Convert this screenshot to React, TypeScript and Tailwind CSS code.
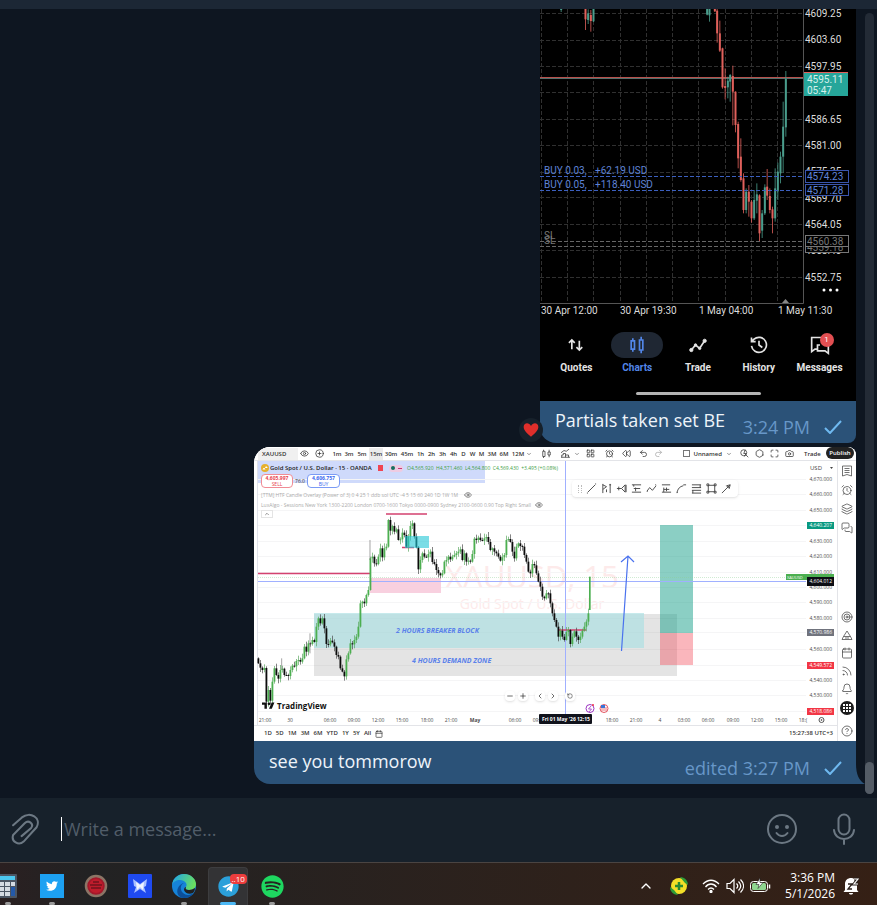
import React from 'react';
import {
    AlarmClock,
    Bell,
    Calendar,
    Camera,
    ChevronDown,
    ChevronLeft,
    ChevronRight,
    ChevronUp,
    CircleHelp,
    CirclePlus,
    Eye,
    Hexagon,
    Layers,
    LayoutGrid,
    Maximize,
    MessagesSquare,
    Minus,
    Plus,
    Redo2,
    Rewind,
    RotateCcw,
    Rss,
    Target,
    Undo2,
} from 'lucide-react';
import { FaSpotify, FaTelegram, FaTwitter } from 'react-icons/fa';

// x, wick top, wick bottom, body top, body bottom, direction (1 = up)
const MOBILE_CANDLES = [
    [93, 27, 36, 27, 30, 1],
    [166, 27, 90, 27, 58, 0],
    [174, 28, 72, 40, 60, 1],
    [182, 30, 95, 45, 63, 0],
    [190, 27, 66, 27, 64, 1],
    [531, 27, 46, 27, 44, 1],
    [538, 27, 65, 27, 46, 1],
    [554, 27, 36, 27, 34, 0],
    [561, 27, 128, 32, 100, 0],
    [569, 62, 156, 100, 152, 0],
    [577, 143, 266, 145, 262, 0],
    [585, 205, 298, 258, 264, 0],
    [593, 230, 295, 242, 262, 1],
    [600, 222, 305, 225, 245, 1],
    [608, 197, 376, 228, 275, 0],
    [616, 274, 397, 275, 375, 0],
    [624, 365, 505, 372, 475, 0],
    [632, 415, 545, 470, 540, 0],
    [640, 520, 640, 535, 630, 0],
    [648, 565, 640, 575, 630, 1],
    [656, 555, 650, 575, 605, 0],
    [664, 600, 668, 605, 655, 0],
    [672, 570, 660, 600, 655, 1],
    [680, 550, 640, 583, 602, 1],
    [688, 583, 725, 586, 700, 0],
    [696, 630, 714, 640, 692, 1],
    [704, 553, 645, 562, 640, 1],
    [711, 507, 600, 560, 587, 0],
    [719, 565, 640, 588, 630, 0],
    [727, 620, 700, 628, 655, 0],
    [735, 505, 665, 565, 655, 1],
    [743, 488, 600, 515, 574, 1],
    [751, 455, 550, 470, 520, 1],
    [759, 305, 518, 380, 470, 1],
    [767, 213, 410, 237, 382, 1],
];

// closing levels of the desktop chart, one entry per 15 minute bar
const CLOSES = [
    670, 683, 690, 684, 785, 750, 782, 725, 685, 705, 716, 690, 686, 705, 705, 708, 690, 677, 679,
    663, 660, 665, 655, 620, 635, 610, 612, 600, 606, 560, 535, 550, 535, 565, 612, 613, 602, 607,
    620, 645, 650, 685, 695, 709, 658, 640, 610, 613, 600, 590, 560, 490, 485, 490, 465, 450, 355,
    350, 370, 372, 350, 325, 352, 325, 320, 240, 272, 258, 275, 268, 300, 298, 278, 285, 320, 290,
    258, 250, 290, 322, 388, 360, 340, 350, 352, 342, 335, 366, 372, 390, 400, 406, 400, 365, 360,
    350, 358, 350, 345, 340, 335, 328, 360, 340, 365, 362, 365, 342, 296, 300, 293, 300, 302, 295,
    291, 306, 330, 325, 335, 340, 350, 362, 352, 345, 300, 297, 306, 335, 355, 320, 310, 318, 320,
    345, 365, 395, 400, 372, 376, 400, 425, 440, 470, 475, 460, 460, 490, 520, 540, 560, 590, 572,
    590, 600, 576, 570, 612, 590, 574, 590, 600, 590, 572, 560, 545, 520,
];

const GRID_Y = [479, 494, 510, 525, 541, 556, 572, 587, 602, 618, 632, 649, 665, 680, 695, 711];

const PRICES: [string, number][] = [
    ['4,670.000', 479],
    ['4,660.000', 494],
    ['4,650.000', 510],
    ['4,630.000', 541],
    ['4,620.000', 556],
    ['4,610.000', 572],
    ['4,600.000', 587],
    ['4,590.000', 602],
    ['4,580.000', 618],
    ['4,560.000', 649],
    ['4,540.000', 680],
    ['4,530.000', 695],
];

const PRICE_TAGS: [string, number, string][] = [
    ['4,640.207', 525, '#089981'],
    ['4,570.986', 632, '#70737d'],
    ['4,549.572', 665, '#f23645'],
    ['4,518.086', 711, '#f23645'],
    ['4,604.012', 581, '#0c0e14'],
];

const TIMES: [string, number][] = [
    ['21:00', 265],
    ['30', 290],
    ['06:00', 330],
    ['09:00', 354],
    ['12:00', 378],
    ['15:00', 402],
    ['18:00', 427],
    ['21:00', 451],
    ['06:00', 515],
    ['09:00', 539],
    ['18:00', 612],
    ['21:00', 636],
    ['4', 660],
    ['03:00', 684],
    ['06:00', 708],
    ['09:00', 733],
    ['12:00', 757],
    ['15:00', 781],
    ['18:(', 803],
];

const INTERVALS: [string, string][] = [
    ['1m', 'w-3'],
    ['3m', 'w-3'],
    ['5m', 'w-3.5'],
    ['15m', 'w-3.5 bg-[#ebebeb]'],
    ['30m', 'w-4'],
    ['45m', 'w-4'],
    ['1h', 'w-[11px]'],
    ['2h', 'w-[11px]'],
    ['3h', 'w-[11px]'],
    ['4h', 'w-[11px]'],
    ['D', 'w-[9px]'],
    ['W', 'w-[9px]'],
    ['M', 'w-[9px]'],
    ['3M', 'w-3'],
    ['6M', 'w-3'],
    ['12M', 'w-4'],
];

const DRAW_TOOLS = [
    'M2 10L10 2M1 11h1M10 1h1',
    'M2 1v10M2 2l4 2-4 3M6 7v3M10 1v10M9 2h2',
    'M1 6h5M6 6l4-4v8zM3 4v4M11 2v8',
    'M1 2h10M3 6h7M5 5v4M1 10h10M3 2v2',
    'M1 9l3-4 3 3 4-5M10 2h1M1 9h1',
    'M1 2h9M3 5v5M3 7h6M1 10h10M6 5v4',
    'M1 11c1-5 3-7 7-8M8 2h3M1 10h1',
    'M1 2h10M1 5h10M1 8h10M1 11h10M10 2v3M2 8v3',
    'M2.500 2.500h7v7h-7zM1 1h2v2H1zM9 1h2v2H9zM1 9h2v2H1zM9 9h2v2H9z',
    'M1 11L10 2M6 3l4-1-1 4z',
];

function MobileChart() {
    const columns = [541, 567, 593, 620, 646, 672, 698, 725, 751, 777];
    const rows = [13, 40, 66, 92, 119, 145, 172, 197, 224, 250, 277];
    const prices: [string, number][] = [
        ['4609.25', 13],
        ['4603.60', 39],
        ['4597.95', 66],
        ['4586.65', 119],
        ['4581.00', 145],
        ['4575.35', 171],
        ['4569.70', 198],
        ['4564.05', 224],
        ['4558.40', 250],
        ['4552.75', 277],
    ];

    return (
        <svg viewBox="540 9 316 312" className="block w-full font-[Roboto] text-[10px]" role="img" aria-label="Gold chart">
            <g stroke="#303030" strokeDasharray="4 2" shapeRendering="crispEdges">
                {columns.map((x) => (
                    <path key={x} d={`M${x} 9V303`} />
                ))}
                {rows.map((y) => (
                    <path key={y} d={`M540 ${y}H803`} />
                ))}
            </g>
            <path d="M803.5 9V303.5H540" fill="none" stroke="#555" />
            <path d="M540 77.5H803" stroke="#b8504c" />
            <path d="M540 78.5H803" stroke="#55706c" />
            <g transform="translate(530 0) scale(0.33333)">
                {MOBILE_CANDLES.map(([x, high, low, top, bottom, up]) => (
                    <g key={x} fill={up ? '#4a9d8c' : '#e0605b'}>
                        <rect x={x - 1} y={high} width="3" height={low - high} opacity="0.8" />
                        <rect x={x - 2.5} y={top} width="6" height={bottom - top} />
                    </g>
                ))}
            </g>
            <g fill="#dcdcdc">
                {prices.map(([label, y]) => (
                    <text key={label} x="805" y={y + 4}>
                        {label}
                    </text>
                ))}
            </g>
            <rect x="804" y="72" width="44" height="24" fill="#26a69a" />
            <path d="M804 72.5h44" stroke="#e0605b" />
            <g fill="#d5f0ec">
                <text x="807" y="83">4595.11</text>
                <text x="807" y="94">05:47</text>
            </g>
            <g stroke="#3c60c0" strokeDasharray="4 2" shapeRendering="crispEdges">
                <path d="M540 176.5H804M540 190.5H804" />
            </g>
            <g fill="#5f83d6">
                <text x="544" y="174">BUY 0.03,</text>
                <text x="595" y="174">+62.19 USD</text>
                <text x="544" y="188">BUY 0.05,</text>
                <text x="595" y="188">+118.40 USD</text>
            </g>
            <g fill="#000" stroke="#3a55ad">
                <rect x="805.5" y="170.5" width="43" height="12" />
                <rect x="805.5" y="184.5" width="43" height="11" />
            </g>
            <g fill="#5f83d6">
                <text x="807" y="180">4574.23</text>
                <text x="807" y="194">4571.28</text>
            </g>
            <g stroke="#666" strokeDasharray="4 2" shapeRendering="crispEdges">
                <path d="M540 241.5H804M540 246.5H804" />
            </g>
            <g fill="#777">
                <text x="544" y="239">SL</text>
                <text x="544" y="244">SL</text>
            </g>
            <g fill="#000" stroke="#777">
                <rect x="805.5" y="241.5" width="43" height="11" />
                <text x="807" y="251" fill="#777" stroke="none">
                    4559.18
                </text>
                <rect x="805.5" y="235.5" width="43" height="11" />
            </g>
            <text x="807" y="245" fill="#777">
                4560.38
            </text>
            <g fill="#fff">
                <circle cx="824" cy="290" r="1.5" />
                <circle cx="830.500" cy="290" r="1.5" />
                <circle cx="837" cy="290" r="1.5" />
            </g>
            <path d="M782 303l3.500-4 3.500 4z" fill="#888" />
            <g fill="#dcdcdc">
                <text x="541" y="314">30 Apr 12:00</text>
                <text x="620" y="314">30 Apr 19:30</text>
                <text x="699" y="314">1 May 04:00</text>
                <text x="778" y="314">1 May 11:30</text>
            </g>
        </svg>
    );
}

const PHONE_TABS = [
    {
        label: 'Quotes',
        icon: <path d="M7 17V6M3.500 9.500L7 6l3.500 3.500M16 7v11M12.500 14.500L16 18l3.500-3.500" />,
    },
    {
        label: 'Charts',
        icon: <path d="M5 7h4v10H5zM7 4v3M7 17v3M15 6h4v12h-4zM17 2v4M17 18v4" />,
    },
    {
        label: 'Trade',
        icon: (
            <>
                <path d="M4 18l5-6 5 4 6-9" />
                <g fill="currentColor" strokeWidth="1">
                    <circle cx="4" cy="18" r="2" />
                    <circle cx="9" cy="12" r="1.500" />
                    <circle cx="14" cy="16" r="1.500" />
                    <circle cx="20" cy="7" r="2" />
                </g>
            </>
        ),
    },
    {
        label: 'History',
        icon: <path d="M3 13a9 9 0 1 0 3-8L3 8M3 3v5h5M12 7v5l4 3" />,
    },
    {
        label: 'Messages',
        icon: <path d="M9 17H6l-4 3V3h16v3M22 9v13l-4-3H9v-7h3" />,
    },
];

function PhoneScreen() {
    return (
        <div className="bg-black">
            <MobileChart />
            <nav className="flex h-20 flex-col items-center pt-[11px] font-[Roboto]">
                <div className="grid w-full grid-cols-5 px-1.5">
                    {PHONE_TABS.map(({ label, icon }) => {
                        const active = label === 'Charts';
                        return (
                            <button
                                key={label}
                                className={`flex flex-col items-center text-[10px] leading-5 font-bold ${active ? 'text-[#5286e8]' : 'text-[#e4e4e4]'}`}
                            >
                                <span
                                    className={`relative flex h-[26px] w-13 items-center justify-center rounded-full ${active ? 'bg-[#1f2733]' : ''}`}
                                >
                                    <svg
                                        viewBox="0 0 24 24"
                                        className="h-5 w-5"
                                        fill="none"
                                        stroke="currentColor"
                                        strokeWidth="2"
                                        aria-hidden="true"
                                    >
                                        {icon}
                                    </svg>
                                    {label === 'Messages' && (
                                        <span className="absolute top-px right-3 flex h-3.5 w-3.5 items-center justify-center rounded-full bg-[#e24f52] text-[8px] leading-3 font-normal text-white">
                                            1
                                        </span>
                                    )}
                                </span>
                                {label}
                            </button>
                        );
                    })}
                </div>
                <div className="mt-3.5 h-[3px] w-[125px] rounded-full bg-[#b4b4b4]" />
            </nav>
        </div>
    );
}

function DesktopChart() {
    return (
        <svg viewBox="254 461 583 264" className="block w-full text-[6px]" role="img" aria-label="XAUUSD 15 minute chart">
            <rect x="254" y="461" width="583" height="264" fill="#fff" />
            <path d="M257.500 461V725" stroke="#e0e2ea" />
            <g fill="#fdeaea" textAnchor="middle">
                <text x="532" y="588" className="text-[31px]">
                    XAUUSD, 15
                </text>
                <text x="532" y="609" className="text-[14px]">
                    Gold Spot / U.S. Dollar
                </text>
            </g>
            <rect x="258" y="461" width="227" height="22" fill="#cfdafb" />
            <g stroke="#f5f5f6">
                {GRID_Y.map((y) => (
                    <path key={y} d={`M258 ${y}.5H806`} />
                ))}
            </g>
            <rect x="314" y="614" width="363" height="62" fill="#787878" opacity="0.2" />
            <rect x="314" y="613" width="330" height="35" fill="#a9dfe2" opacity="0.65" />
            <rect x="370" y="578" width="71" height="15" fill="#f8d0df" />
            <rect x="660" y="525" width="33" height="108" fill="#089981" opacity="0.47" />
            <rect x="660" y="633" width="33" height="32" fill="#f23645" opacity="0.36" />
            <path d="M258 577.500H806" stroke="#8ccf92" strokeDasharray="1 1" opacity="0.4" />
            <g fill="#a0b0ff">
                <rect x="258" y="581" width="548" height="1" />
                <rect x="565" y="461" width="1" height="253" />
            </g>
            <g stroke="#d4426f" strokeWidth="1.500">
                <path d="M386 514H427M402 547.500H414M258 573.500H370M559 630H586" />
            </g>
            <g transform="translate(250 440) scale(0.33333)">
                {CLOSES.map((close, i) => {
                    const open = i === 0 ? 655 : CLOSES[i - 1];
                    const x = 25 + i * 6;
                    const up = close < open;
                    const top = Math.min(open, close);
                    const bottom = Math.max(open, close);
                    const above = 3 + ((i * 7) % 13);
                    const below = 2 + ((i * 11) % 14);
                    return (
                        <g key={i}>
                            <rect
                                x={x - 0.75}
                                y={top - above}
                                width="2"
                                height={bottom - top + above + below}
                                fill={up ? '#55a45a' : '#444'}
                            />
                            <rect
                                x={x - 2.5}
                                y={top}
                                width="5.5"
                                height={Math.max(bottom - top, 3)}
                                fill={up ? '#4caf50' : '#0c0c0c'}
                            />
                        </g>
                    );
                })}
                <path d="M360 300V360M180 580V640M95 655V690" stroke="#777" strokeWidth="2" />
                <rect x="1017" y="410" width="5" height="100" fill="#4caf50" />
            </g>
            <rect x="405" y="536" width="24" height="12" fill="#22c7d6" opacity="0.6" />
            <path d="M621.500 651L628 556M621 562l7-6 6 6" fill="none" stroke="#4a72ee" strokeWidth="1.200" />
            <g fill="#5b82ea" className="text-[7px] font-bold italic">
                <text x="396" y="633">2 HOURS BREAKER BLOCK</text>
                <text x="412" y="663">4 HOURS DEMAND ZONE</text>
            </g>
            <g fill="#111">
                <g transform="translate(262 701) scale(0.35)">
                    <path d="M14 22H7V11H0V4h14zM28 22h-8l7.500-18h8z" />
                    <circle cx="20" cy="8" r="4" />
                </g>
                <text x="277" y="709" className="text-[8px] font-bold">
                    TradingView
                </text>
            </g>
            <g fill="#444">
                <text x="810" y="470">USD</text>
                <path d="M830 467l1.500 2 1.500-2z" />
            </g>
            <g fill="#4a4a4a" className="text-[5px]" textAnchor="end">
                {PRICES.map(([label, y]) => (
                    <text key={label} x="832" y={y + 2}>
                        {label}
                    </text>
                ))}
            </g>
            <rect x="786" y="574" width="48" height="6" fill="#4caf50" />
            <text x="787" y="579" fill="#fff" className="text-[4px]">
                XAUUSD
            </text>
            {PRICE_TAGS.map(([label, y, color]) => (
                <g key={label} className="text-[5px]">
                    <rect x="807" y={label === '4,604.012' ? 577 : y - 3} width="27" height={label === '4,604.012' ? 9 : 7} fill={color} />
                    <text x="832" y={label === '4,604.012' ? 583 : y + 2} fill="#fff" textAnchor="end">
                        {label}
                    </text>
                </g>
            ))}
            <g fill="#4a4a4a" textAnchor="middle" className="text-[5px]">
                {TIMES.map(([label, x]) => (
                    <text key={x} x={x} y="722">
                        {label}
                    </text>
                ))}
                <text x="475" y="722" className="font-bold">
                    May
                </text>
            </g>
            <g fill="none" stroke="#555">
                <circle cx="821.500" cy="720" r="2.500" />
                <circle cx="821.500" cy="720" r="0.500" />
            </g>
            <rect x="539" y="714" width="53" height="10" rx="1" fill="#10121b" />
            <g fill="#fff" className="text-[5px] font-bold">
                <text x="542" y="721">Fri 01 May '26</text>
                <text x="577" y="721">12:15</text>
            </g>
            <g fill="#fff" strokeWidth="1">
                <circle cx="590" cy="708.500" r="4" stroke="#9c35c2" />
                <path d="M591 706l-2.500 3h3l-2.500 3" fill="none" stroke="#9c35c2" strokeWidth="0.800" />
                <circle cx="593" cy="705" r="1" fill="#f23645" />
                <circle cx="604" cy="708.500" r="4" stroke="#e4545f" />
                <path d="M601 708h6M601 710h6" stroke="#e4545f" strokeWidth="0.800" />
                <path d="M601 705h4v3h-4z" fill="#3a74d8" />
            </g>
        </svg>
    );
}

function TradingToolbar() {
    const icon = 'h-[9px] w-[9px] shrink-0';
    return (
        <div className="flex h-[14px] items-center border-b border-[#e3e4e8] bg-white pr-0.5 text-[6px] leading-[12px] font-semibold text-[#333]">
            <span className="ml-1 w-10 bg-[#f0f0f0] pl-1">XAUUSD</span>
            <Eye className={`${icon} ml-0.5`} />
            <CirclePlus className={`${icon} ml-1.5`} />
            <div className="ml-[7px] flex text-center">
                {INTERVALS.map(([label, width]) => (
                    <span key={label} className={width}>
                        {label}
                    </span>
                ))}
            </div>
            <ChevronDown className="h-1.5 w-1.5 shrink-0" />
            <svg viewBox="0 0 12 12" className={`${icon} ml-2.5`} fill="none" stroke="currentColor" aria-hidden="true">
                <path d="M1 3h3v7H1zM2 1v2M2 10v2M8 4h3v4H8zM9.500 1v3M9.500 8v3" />
            </svg>
            <svg viewBox="0 0 12 12" className={`${icon} ml-2.5`} fill="none" stroke="currentColor" aria-hidden="true">
                <path d="M1 11V8h2V6h3v5M6 8h4v3M0 5l4-3 3 1 4-3M0 11h12" />
            </svg>
            <ChevronDown className="ml-1 h-1.5 w-1.5 shrink-0" />
            <LayoutGrid className={`${icon} ml-1.5`} />
            <AlarmClock className={`${icon} ml-2.5`} />
            <Rewind className={`${icon} ml-2`} />
            <Undo2 className={`${icon} ml-2`} />
            <Redo2 className={`${icon} ml-1.5 text-[#aaa]`} />
            <span className="ml-auto h-[7px] w-[7px] shrink-0 border border-[#777]" />
            <span className="ml-1">Unnamed</span>
            <ChevronDown className="ml-1 h-1.5 w-1.5 shrink-0" />
            <svg viewBox="0 0 12 12" className={`${icon} ml-2`} fill="none" stroke="currentColor" aria-hidden="true">
                <circle cx="5" cy="5" r="4" />
                <path d="M8 8l3 3M7 1L5 6h3l-2 4" />
            </svg>
            <Hexagon className={`${icon} ml-1.5`} />
            <Maximize className={`${icon} ml-1.5`} />
            <Camera className={`${icon} ml-1.5`} />
            <span className="ml-2.5 w-5">Trade</span>
            <span className="-mt-0.5 ml-0.5 w-7 rounded-full bg-[#222] text-center text-white">Publish</span>
        </div>
    );
}

function ChartLegend() {
    return (
        <div className="absolute inset-x-0 top-0 pt-[3px] pl-[7px] leading-2">
            <div className="flex items-center whitespace-nowrap">
                <svg viewBox="0 0 8 8" className="h-2 w-2" aria-hidden="true">
                    <circle cx="4" cy="4" r="4" fill="#e6b02c" />
                    <path d="M1.500 5.500l1-1.500h1l1 1.500zM4 4l.7-1.500h1l1 1.500z" fill="#fff" />
                </svg>
                <span className="ml-px w-[108px] text-[6px] font-semibold text-[#222]">
                    Gold Spot / U.S. Dollar · 15 · OANDA
                </span>
                <span className="h-1.5 w-[5px] bg-[#f04452]" />
                <span className="ml-1.5 flex h-[7px] w-3.5 items-center justify-around rounded-sm bg-[#eecbe2]">
                    <span className="h-1 w-1 rounded-full bg-[#16705f]" />
                    <span className="h-px w-1 bg-[#c73a78]" />
                </span>
                <span className="ml-1 text-[5px] text-[#43a047]">
                    O4,565.920&nbsp; H4,571.460&nbsp; L4,564.800&nbsp; C4,569.430&nbsp; +3.495 (+0.08%)
                </span>
            </div>
            <div className="mt-0.5 flex items-center text-center text-[5px] leading-1.5 font-bold">
                <div className="w-8 rounded-sm border border-[#f08c95] bg-white text-[#e8434f]">
                    4,605.997
                    <div className="font-normal">SELL</div>
                </div>
                <span className="w-3.5 font-normal text-[#333]">76.0</span>
                <div className="w-[33px] rounded-sm border border-[#7b9bf5] bg-white text-[#3565ee]">
                    4,606.757
                    <div className="font-normal">BUY</div>
                </div>
            </div>
            <div className="mt-0.5 flex items-center gap-1 text-[5px] leading-[10px] text-[#aaa]">
                [TTM] HTF Candle Overlay (Power of 3) 0 4 25 1 ddb sol UTC -4 5 15 60 240 1D 1W 1M
                <Eye className="ml-0.5 h-2 w-2 text-[#555]" />
            </div>
            <div className="flex items-center gap-1 text-[5px] leading-[10px] text-[#aaa]">
                LuxAlgo - Sessions New York 1300-2200 London 0700-1600 Tokyo 0000-0900 Sydney 2100-0600 0.90 Top Right Small
                <Eye className="h-2 w-2 text-[#555]" />
            </div>
            <div className="flex h-2 w-3 items-center justify-center border border-[#e4e4e4]">
                <ChevronUp className="h-1.5 w-1.5 text-[#333]" />
            </div>
        </div>
    );
}

function TradingScreen() {
    const side = 'h-3 w-3 shrink-0 stroke-[1.5]';
    const move = 'flex h-2.5 w-2.5 items-center justify-center rounded-sm bg-white shadow';
    return (
        <div className="overflow-hidden rounded-tl-2xl rounded-tr-lg bg-white font-['Open_Sans',sans-serif]">
            <TradingToolbar />
            <div className="flex">
                <div className="min-w-0 flex-1">
                    <div className="relative">
                        <DesktopChart />
                        <ChartLegend />
                        <div className="absolute top-[19px] left-[318px] flex h-[17px] items-center gap-1 rounded-sm bg-white px-1.5 text-[#444] shadow">
                            <span className="h-2 w-1 border-x border-dotted border-[#bbb]" />
                            {DRAW_TOOLS.map((d) => (
                                <svg
                                    key={d}
                                    viewBox="0 0 12 12"
                                    className="h-[11px] w-[11px]"
                                    fill="none"
                                    stroke="currentColor"
                                    aria-hidden="true"
                                >
                                    <path d={d} />
                                </svg>
                            ))}
                        </div>
                        <div className="absolute top-[230px] left-[251px] flex gap-[3px] text-[#222]">
                            <span className={move}>
                                <Minus className="h-2 w-2" />
                            </span>
                            <span className={move}>
                                <Plus className="h-2 w-2" />
                            </span>
                            <span className={`${move} ml-1`}>
                                <ChevronLeft className="h-2 w-2" />
                            </span>
                            <span className={move}>
                                <ChevronRight className="h-2 w-2" />
                            </span>
                            <span className={`${move} ml-1`}>
                                <RotateCcw className="h-1.5 w-1.5" />
                            </span>
                        </div>
                    </div>
                    <div className="flex h-4 items-center gap-1 border-t border-[#e3e4e8] pr-1 pl-2.5 text-[6px] font-semibold text-[#333]">
                        {['1D', '5D', '1M', '3M', '6M', 'YTD', '1Y', '5Y', 'All'].map((range) => (
                            <span key={range}>{range}</span>
                        ))}
                        <Calendar className="h-2 w-2" />
                        <span className="ml-auto">15:27:38 UTC+3</span>
                    </div>
                </div>
                <div className="flex w-[19px] flex-col items-center justify-between border-l border-[#e3e4e8] pt-1 pb-1 text-[#444]">
                    <div className="flex flex-col items-center gap-[7px]">
                        <svg viewBox="0 0 24 24" className={side} fill="none" stroke="currentColor" aria-hidden="true">
                            <path d="M3 2h18v20l-9-3-9 3zM7 7h10M7 11h10M7 15h10" />
                        </svg>
                        <AlarmClock className={side} />
                        <Layers className={side} />
                        <MessagesSquare className={side} />
                    </div>
                    <div className="flex flex-col items-center gap-1.5">
                        <Target className={side} />
                        <svg viewBox="0 0 24 24" className={side} fill="none" stroke="currentColor" aria-hidden="true">
                            <path d="M12 4l7 11H5zM5 15l-3 6h20l-3-6M8 18h8" />
                        </svg>
                        <Calendar className={side} />
                        <Rss className={side} />
                        <Bell className={side} />
                        <span className="grid h-3.5 w-3.5 grid-cols-3 place-items-center gap-px rounded-full bg-[#1d1d1d] p-[3px]">
                            {Array.from({ length: 9 }, (_, i) => (
                                <span key={i} className="h-0.5 w-0.5 bg-white" />
                            ))}
                        </span>
                        <CircleHelp className={`${side} mt-1`} />
                    </div>
                </div>
            </div>
        </div>
    );
}

function SentMark({ text }: { text: string }) {
    return (
        <span className="flex items-center gap-3.5 text-lg leading-6 text-[#6797c8]">
            {text}
            <svg viewBox="0 0 18 14" className="h-3.5 w-[18px]" fill="none" stroke="#6fb9f0" strokeWidth="2" aria-label="Sent">
                <path d="M1 8l5 5L17 1" />
            </svg>
        </span>
    );
}

function Conversation() {
    return (
        <main className="relative flex min-h-0 flex-1 flex-col items-end justify-end gap-1 overflow-hidden bg-[#0e1621] pr-[21px] pb-3.5">
            <article className="relative w-[316px] shrink-0">
                <PhoneScreen />
                <div className="flex h-[42px] justify-between rounded-br-lg rounded-bl-2xl bg-[#2b5278] pr-3.5 pl-[15px]">
                    <p className="pt-[5px] text-lg leading-7 text-[#eef4fa]">Partials taken set BE</p>
                    <div className="pt-3.5">
                        <SentMark text="3:24 PM" />
                    </div>
                </div>
                <span className="absolute bottom-px -left-[21px] flex h-6 w-6 items-center justify-center rounded-full bg-[#17212b]">
                    <svg viewBox="0 0 24 24" className="h-4 w-4" aria-label="Heart reaction">
                        <path
                            d="M12 22C5 16 1 12 1 7.500 1 1 9 0 12 6c3-6 11-5 11 1.500C23 12 19 16 12 22z"
                            fill="#e02f2b"
                        />
                    </svg>
                </span>
            </article>
            <article className="relative w-[602px] shrink-0">
                <TradingScreen />
                <div className="flex h-[43px] justify-between rounded-bl-2xl bg-[#2b5278] pr-3.5 pl-[15px]">
                    <p className="pt-1.5 text-lg leading-7 text-[#eef4fa]">see you tommorow</p>
                    <div className="pt-[15px]">
                        <SentMark text="edited 3:27 PM" />
                    </div>
                </div>
                <svg viewBox="0 0 9 20" className="absolute bottom-0 left-full h-5 w-[9px]" aria-hidden="true">
                    <path d="M0 0C0 10 3 17 9 20H0z" fill="#2b5278" />
                </svg>
            </article>
            <div className="absolute inset-y-1 right-[3px] flex w-[9px] items-end rounded-full bg-[#232b36]">
                <div className="h-8 w-full rounded-full bg-[#545c66]" />
            </div>
        </main>
    );
}

function Composer() {
    return (
        <form className="flex h-16 shrink-0 items-center bg-[#17212b] pr-5 pb-0.5 pl-[11px] text-[#6c7883]">
            <button type="button" aria-label="Attach file">
                <svg viewBox="32 76 82 94" className="h-8 w-7" fill="none" stroke="currentColor" strokeWidth="6" strokeLinecap="round" aria-hidden="true">
                    <path d="M38 112L64 89C88 70 122 90 107 118L69 160C54 173 32 160 38 141L72 106C84 95 100 108 91 120L63 144" />
                </svg>
            </button>
            <span className="ml-[22px] h-6 w-px bg-white" />
            <input
                aria-label="Message"
                placeholder="Write a message..."
                className="ml-0.5 min-w-0 flex-1 bg-transparent text-lg text-white outline-none placeholder:text-[#515d69]"
            />
            <button type="button" aria-label="Emoji">
                <svg viewBox="0 0 32 32" className="h-8 w-8" fill="none" stroke="currentColor" strokeWidth="2" strokeLinecap="round" aria-hidden="true">
                    <circle cx="16" cy="16" r="14" />
                    <path d="M10.500 20c3 4 8 4 11 0" />
                    <g fill="currentColor" stroke="none">
                        <circle cx="11" cy="14" r="2" />
                        <circle cx="21" cy="14" r="2" />
                    </g>
                </svg>
            </button>
            <button type="button" aria-label="Record voice message" className="ml-[33px]">
                <svg viewBox="0 0 26 32" className="h-8 w-[26px]" fill="none" stroke="currentColor" strokeWidth="2" strokeLinecap="round" aria-hidden="true">
                    <rect x="7.500" y="1.500" width="11" height="20" rx="5.500" />
                    <path d="M3 17c1 12 19 12 20 0M13 26v5" />
                </svg>
            </button>
        </form>
    );
}

function EdgeIcon() {
    return (
        <svg viewBox="0 0 24 24" className="h-6 w-6" aria-hidden="true">
            <defs>
                <linearGradient id="edge-top" x1="0" x2="1" y1="0.200" y2="0.500">
                    <stop offset="0" stopColor="#22a6e8" />
                    <stop offset="1" stopColor="#6be05c" />
                </linearGradient>
            </defs>
            <circle cx="12" cy="12" r="12" fill="#1683d8" />
            <path d="M0 11C1 4 6 0 12 0c7 0 12 5 12 10 0 4-3 6-7 6-3 0-4-1-3-3 2-3-1-7-6-7-4 0-7 2-8 5z" fill="url(#edge-top)" />
            <path d="M13 9c-4 0-6 6-2 10 3 3 8 2 11 0-2 3-6 5-10 5-6 0-8-6-6-10 1-3 4-5 7-5z" fill="#0c4f99" />
            <path d="M14 13c-1 2 0 3 3 3 2 0 4-1 6-2 0 2-1 4-2 5-4 2-8 0-9-3 0-2 1-3 2-3z" fill="#222" />
        </svg>
    );
}

function TaskbarApps() {
    const apps = [
        {
            name: 'Calculator',
            open: true,
            icon: (
                <svg viewBox="0 0 18 24" className="h-6 w-[18px]" aria-hidden="true">
                    <rect width="18" height="24" rx="1" fill="#4b5563" />
                    <rect x="1" y="2" width="15" height="4" fill="#4cc8f0" />
                    <path d="M1 8h4v4H1zM6 8h5v4H6zM12 8h4v4h-4zM1 13h4v4H1zM6 13h5v4H6zM1 18h4v4H1zM6 18h5v4H6z" fill="#d5dbe2" />
                    <path d="M12 13h4v9h-4z" fill="#2459a8" />
                </svg>
            ),
        },
        {
            name: 'Twitter',
            open: true,
            icon: (
                <span className="flex h-6 w-6 items-center justify-center bg-[#1da1f2]">
                    <FaTwitter className="h-3 w-3 text-white" />
                </span>
            ),
        },
        {
            name: 'Recorder',
            open: false,
            icon: (
                <svg viewBox="0 0 24 24" className="h-6 w-6" aria-hidden="true">
                    <circle cx="12" cy="12" r="10" fill="#a3182a" stroke="#8c7566" strokeWidth="2.500" />
                    <circle cx="12" cy="12" r="7" fill="#c01c2c" />
                    <path d="M6 11h12M7 14h10M9 8h6" stroke="#70131d" strokeWidth="1.500" />
                </svg>
            ),
        },
        {
            name: 'Butterfly',
            open: false,
            icon: (
                <svg viewBox="0 0 24 24" className="h-6 w-6" aria-hidden="true">
                    <rect width="24" height="24" rx="1" fill="#1f4af0" />
                    <path d="M5 5l7 5 7-5-1 7-2 1 2 6-6-4-6 4 2-6-2-1z" fill="#a9bfff" />
                    <path d="M8 8l4 3 4-3-1 8-3-3-3 3z" fill="#f2f5ff" />
                </svg>
            ),
        },
        { name: 'Edge', open: true, icon: <EdgeIcon /> },
        {
            name: 'Telegram',
            open: false,
            icon: (
                <span className="relative rounded-full">
                    <span className="absolute inset-1 rounded-full bg-white" />
                    <FaTelegram className="relative h-[21px] w-[21px] text-[#2ba0da]" />
                    <span className="absolute -top-0.5 left-3 rounded-sm bg-[#ec3d3d] px-0.5 text-[8px] leading-[10px] text-white">
                        ..10
                    </span>
                </span>
            ),
        },
        { name: 'Spotify', open: true, icon: <FaSpotify className="h-[23px] w-[23px] text-[#1ed760]" /> },
    ];

    return (
        <div className="-ml-3.5 flex h-full">
            {apps.map(({ name, open, icon }) => {
                const active = name === 'Telegram';
                return (
                    <button
                        key={name}
                        aria-label={name}
                        className={`relative mx-0.5 mt-1 flex w-10 items-center justify-center ${active ? 'rounded-t border border-b-0 border-[#3d3d3f] bg-[#333335]' : ''}`}
                    >
                        {icon}
                        {active && <span className="absolute bottom-0 h-[3px] w-4 rounded-full bg-[#4cb8f5]" />}
                        {open && <span className="absolute bottom-0 h-[3px] w-1.5 rounded-full bg-[#9a9a9a]" />}
                    </button>
                );
            })}
        </div>
    );
}

function SystemTray() {
    return (
        <div className="flex items-center pt-1 pr-[18px] text-white">
            <ChevronUp className="h-4 w-4" />
            <svg viewBox="0 0 18 18" className="ml-4 h-[18px] w-[18px]" aria-hidden="true">
                <circle cx="9" cy="9" r="8" fill="#f4df28" />
                <path d="M10 0c5 0 8 4 8 8l-3-2zM8 18c-5 0-8-4-8-8l4 3z" fill="#2f9c37" />
                <path d="M9 5v8M5 9h8" stroke="#2a8a33" strokeWidth="2.500" />
            </svg>
            <svg viewBox="0 0 18 14" className="ml-3.5 h-3.5 w-[18px]" fill="none" stroke="currentColor" strokeWidth="1.300" aria-hidden="true">
                <path d="M1 5c5-5 11-5 16 0M3.500 8c3-4 8-4 11 0M6 10.500c2-2 4-2 6 0" />
                <circle cx="9" cy="12.500" r="1" fill="currentColor" />
            </svg>
            <svg viewBox="0 0 18 16" className="ml-1.5 h-4 w-[18px]" fill="none" stroke="currentColor" strokeWidth="1.200" aria-hidden="true">
                <path d="M1 5.500h3l4-4v13l-4-4H1zM10.500 5.500c1.500 1.500 1.500 3.500 0 5M12.500 3.500c3 3 3 6 0 9M14.500 1.500c4 4 4 9 0 13" />
            </svg>
            <svg viewBox="0 0 21 16" className="ml-1.5 h-4 w-[21px]" aria-hidden="true">
                <rect x="0.500" y="3.500" width="17" height="10" rx="3" fill="none" stroke="#fff" />
                <rect x="2" y="5" width="14" height="7" rx="1.500" fill="#8fd690" />
                <path d="M19.500 6.500v4" stroke="#fff" strokeWidth="1.500" />
                <path d="M10 0L6 6.500h3l-1 4 5-6h-3z" fill="#fff" stroke="#222" strokeWidth="0.600" />
            </svg>
            <div className="ml-3.5 text-right text-xs leading-4">
                <div>3:36 PM</div>
                <div>5/1/2026</div>
            </div>
            <svg viewBox="0 0 16 18" className="ml-2 h-[18px] w-4" aria-hidden="true">
                <path d="M2 13V7c0-4 3-6 6-6s6 2 6 6v6l1.500 2H.5zM6 16h4c0 2-4 2-4 0z" fill="#fff" />
                <path d="M5 7h4l-4 5h4" fill="none" stroke="#2b211c" strokeWidth="1.300" />
                <path d="M11 2h4l-4 5h4" fill="none" stroke="#2b211c" strokeWidth="3" />
                <path d="M11 2h4l-4 5h4" fill="none" stroke="#fff" strokeWidth="1.200" />
            </svg>
        </div>
    );
}

export default function App() {
    return (
        <div className="flex h-screen min-h-[600px] flex-col overflow-hidden bg-[#0e1621] font-['Open_Sans',sans-serif]">
            <header className="h-[9px] shrink-0 bg-[#1c2735]" />
            <Conversation />
            <Composer />
            <footer className="flex h-[43px] shrink-0 justify-between border-t border-[#4a4442] bg-linear-to-r from-[#2a2021] via-[#222223] via-10% to-[#352015]">
                <TaskbarApps />
                <SystemTray />
            </footer>
        </div>
    );
}
